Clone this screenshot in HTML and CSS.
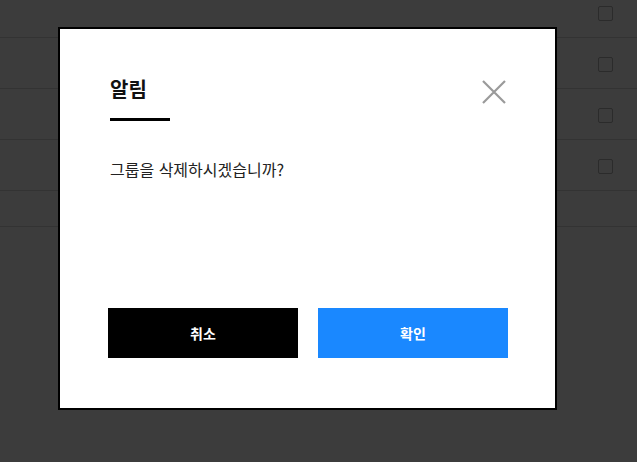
FILE: index.html
```html
<!DOCTYPE html>
<html lang="ko">
<head>
<meta charset="utf-8">
<link rel="stylesheet" href="styles.css">
</head>
<body>
<div class="list">
  <div class="row"><span class="check"></span></div>
  <div class="row"><span class="check"></span></div>
  <div class="row"><span class="check"></span></div>
  <div class="row"><span class="check"></span></div>
  <div class="row row-short"></div>
</div>

<div class="modal">
  <div class="modal-head">
    <h2 class="modal-title">알림</h2>
    <button class="modal-close" aria-label="닫기">
      <svg width="24" height="24" viewBox="0 0 24 24"><path d="M1 1 L23 23 M23 1 L1 23" stroke="#9a9a9a" stroke-width="2.2" fill="none"/></svg>
    </button>
  </div>
  <p class="modal-msg">그룹을 삭제하시겠습니까?</p>
  <div class="modal-actions">
    <button class="btn btn-cancel">취소</button>
    <button class="btn btn-ok">확인</button>
  </div>
</div>
</body>
</html>
```
FILE: styles.css
```css
html, body {
  margin: 0;
  padding: 0;
  background: #3c3c3c;
  font-family: "Noto Sans CJK KR", "Noto Sans", sans-serif;
  overflow: hidden;
  height: 462px;
}

.list {
  margin-top: -13px;
}

.row {
  border-bottom: 1px solid #333333;
  display: flex;
  align-items: center;
  justify-content: flex-end;
  padding-right: 24px;
  padding-top: 3px;
  box-sizing: border-box;
  height: 51px;
}

.row-short {
  height: 36px;
}

.check {
  width: 15px;
  height: 15px;
  box-sizing: border-box;
  border: 1px solid #2b2b2b;
  border-radius: 2px;
  display: block;
}

.modal {
  position: fixed;
  left: 58px;
  top: 27px;
  width: 499px;
  height: 383px;
  box-sizing: border-box;
  background: #ffffff;
  border: 2px solid #000000;
  padding: 46px 47px 0 48px;
}

.modal-head {
  display: flex;
  justify-content: space-between;
  align-items: flex-start;
}

.modal-title {
  margin: 0 0 0 2px;
  font-size: 20px;
  font-weight: 700;
  line-height: 28px;
  color: #111111;
  width: 60px;
  height: 46px;
  box-sizing: border-box;
  border-bottom: 3px solid #000000;
}

.modal-close {
  margin: 5px 2px 0 0;
  padding: 0;
  border: 0;
  background: none;
  width: 24px;
  height: 24px;
  cursor: pointer;
}

.modal-close svg {
  display: block;
}

.modal-msg {
  margin: 37px 0 0 2px;
  font-size: 16px;
  line-height: 22px;
  color: #222222;
}

.modal-actions {
  margin-top: 128px;
  display: flex;
  gap: 20px;
}

.btn {
  width: 190px;
  height: 50px;
  border: 0;
  color: #ffffff;
  font-family: "Noto Sans CJK KR", "Noto Sans", sans-serif;
  font-size: 14px;
  font-weight: 700;
  cursor: pointer;
}

.btn-cancel {
  background: #000000;
}

.btn-ok {
  background: #1a88ff;
}
```
